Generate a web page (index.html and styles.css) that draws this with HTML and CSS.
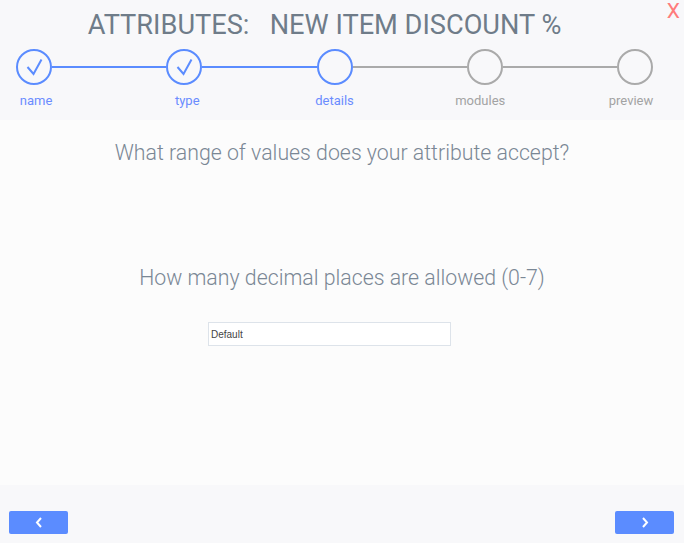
FILE: index.html
```html
<!DOCTYPE html>
<html>
<head>
<meta charset="utf-8">
<link rel="stylesheet" href="styles.css">
</head>
<body>
<div class="page">
  <header class="header">
    <h1 class="title">ATTRIBUTES:&nbsp;&nbsp;&nbsp;NEW ITEM DISCOUNT %</h1>
    <span class="close">X</span>
    <div class="stepper">
      <div class="step done">
        <span class="circle"><svg viewBox="0 0 36 36" width="36" height="36"><polyline points="11.5,18 17.5,25 25.5,10.5" fill="none" stroke="#5b8cff" stroke-width="2"/></svg></span>
        <span class="label">name</span>
      </div>
      <div class="line done"></div>
      <div class="step done">
        <span class="circle"><svg viewBox="0 0 36 36" width="36" height="36"><polyline points="11.5,18 17.5,25 25.5,10.5" fill="none" stroke="#5b8cff" stroke-width="2"/></svg></span>
        <span class="label">type</span>
      </div>
      <div class="line done"></div>
      <div class="step current">
        <span class="circle"></span>
        <span class="label">details</span>
      </div>
      <div class="line"></div>
      <div class="step">
        <span class="circle"></span>
        <span class="label">modules</span>
      </div>
      <div class="line"></div>
      <div class="step">
        <span class="circle"></span>
        <span class="label">preview</span>
      </div>
    </div>
  </header>
  <main class="content">
    <p class="question q1">What range of values does your attribute accept?</p>
    <p class="question q2">How many decimal places are allowed (0-7)</p>
    <div class="field-row">
      <div class="field">Default</div>
    </div>
  </main>
  <footer class="footer">
    <button class="nav-btn"><svg width="8" height="11" viewBox="0 0 8 11"><polyline points="6,1 2,5.5 6,10" fill="none" stroke="#fff" stroke-width="2"/></svg></button>
    <button class="nav-btn"><svg width="8" height="11" viewBox="0 0 8 11"><polyline points="2,1 6,5.5 2,10" fill="none" stroke="#fff" stroke-width="2"/></svg></button>
  </footer>
</div>
</body>
</html>
```
FILE: styles.css
```css
html, body {
  margin: 0;
  padding: 0;
}
body {
  font-family: Roboto, "Liberation Sans", sans-serif;
  background: #fcfcfc;
}
.page {
  width: 684px;
  height: 543px;
  display: flex;
  flex-direction: column;
  overflow: hidden;
}
.header {
  position: relative;
  height: 120px;
  background: #f8f8fa;
  box-sizing: border-box;
  padding-top: 10px;
}
.title {
  margin: 0;
  padding-right: 35px;
  text-align: center;
  font-weight: 400;
  font-size: 27.2px;
  line-height: 31px;
  color: #6f7c89;
}
.close {
  position: absolute;
  top: 0;
  right: 4px;
  font-size: 21px;
  line-height: 23px;
  color: #ff7b7b;
}
.stepper {
  display: flex;
  align-items: flex-start;
  margin: 8px 31px 0 16px;
}
.step {
  width: 36px;
  display: flex;
  flex-direction: column;
  align-items: center;
}
.circle {
  width: 36px;
  height: 36px;
  box-sizing: border-box;
  border: 2px solid #aaaaaa;
  border-radius: 50%;
  display: flex;
  align-items: center;
  justify-content: center;
  background: transparent;
}
.circle svg {
  flex: none;
  margin: -2px;
}
.step.done .circle,
.step.current .circle {
  border-color: #5b8cff;
}
.label {
  margin-top: 8px;
  white-space: nowrap;
  font-size: 13px;
  line-height: 15px;
  color: #a3a3a3;
}
.step.done .label,
.step.current .label {
  color: #6b8cff;
}
.step:first-child .label {
  margin-left: 4px;
}
.step:nth-child(3) .label {
  margin-left: 6px;
}
.step:nth-child(7) .label {
  margin-right: 9px;
}
.step:nth-child(9) .label {
  margin-right: 8px;
}
.line {
  flex: 1;
  height: 2px;
  margin-top: 17px;
  background: #aaaaaa;
}
.line.done {
  background: #5b8cff;
}
.content {
  flex: 1;
  background: #fcfcfc;
  padding-top: 20px;
}
.question {
  margin: 0;
  text-align: center;
  font-weight: 300;
  font-size: 21.3px;
  line-height: 25px;
  color: #7a8795;
}
.q2 {
  margin-top: 100px;
}
.field-row {
  margin-top: 32px;
  padding-left: 208px;
}
.field {
  width: 243px;
  height: 24px;
  box-sizing: border-box;
  border: 1px solid #dde3ea;
  background: #ffffff;
  padding-left: 2px;
  display: flex;
  align-items: center;
  font-family: "Liberation Sans", Arial, sans-serif;
  font-size: 10px;
  color: #444444;
}
.footer {
  height: 58px;
  background: #f8f8fa;
  box-sizing: border-box;
  padding: 26px 10px 0 9px;
  display: flex;
  justify-content: space-between;
  align-items: flex-start;
}
.nav-btn {
  width: 59px;
  height: 23px;
  border: none;
  border-radius: 2px;
  background: #5b8cff;
  padding: 0;
  display: flex;
  align-items: center;
  justify-content: center;
}
```
